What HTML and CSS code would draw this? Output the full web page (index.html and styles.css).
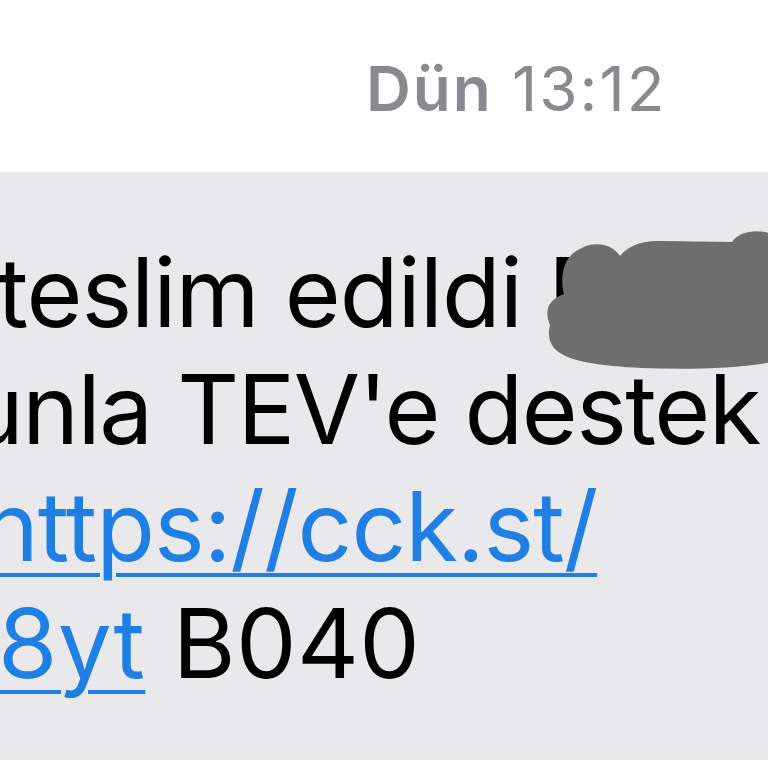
FILE: index.html
```html
<!DOCTYPE html>
<html lang="tr">
<head>
<meta charset="utf-8">
<title>Mesaj</title>
<link rel="stylesheet" href="styles.css">
</head>
<body>
<div class="screen">
  <div class="stamp"><span class="day">Dün</span> 13:12</div>
  <div class="bubble">
    <div class="line l1">teslim edildi E</div>
    <div class="line l2">unla TEV'e destek</div>
    <div class="line l3"><a class="link" href="#">https://cck.st/</a></div>
    <div class="line l4"><a class="link" href="#">8yt</a> B040</div>
    <svg class="blob" viewBox="0 0 230 140" width="230" height="140" aria-hidden="true">
      <path d="M8 95 C2 80 6 70 22 64 C18 50 20 28 36 20 C52 10 70 14 78 26 C86 16 100 10 120 11 L190 12 C196 2 214 -2 230 4 L230 132 C200 138 150 140 100 138 C60 136 24 132 12 118 C6 110 6 102 8 95 Z" fill="#6e6e6e"/>
    </svg>
  </div>
</div>
</body>
</html>
```
FILE: styles.css
```css
html, body {
  margin: 0;
  padding: 0;
  background: #ffffff;
}
.screen {
  width: 768px;
  height: 768px;
  overflow: hidden;
  font-family: "Inter", "Liberation Sans", Arial, sans-serif;
}
.stamp {
  height: 172px;
  box-sizing: border-box;
  padding: 54px 0 0 366px;
  font-size: 62px;
  line-height: 70px;
  letter-spacing: 2px;
  color: #8a8a8e;
  white-space: nowrap;
}
.day {
  font-weight: 600;
}
.bubble {
  position: relative;
  height: 588px;
  box-sizing: border-box;
  padding-top: 62px;
  background: #e9e9eb;
  overflow: hidden;
}
.line {
  font-size: 96px;
  line-height: 117px;
  letter-spacing: -1px;
  color: #000000;
  white-space: nowrap;
}
.l1 { margin-left: -3px; }
.l2 { margin-left: -33px; letter-spacing: -1.5px; }
.l3 { margin-left: -18px; }
.l4 { margin-left: -2px; letter-spacing: 0.4px; }
.link {
  color: #1f7fe5;
  text-decoration: underline;
  text-decoration-thickness: 4px;
  text-underline-offset: 12px;
}
.blob {
  position: absolute;
  left: 542px;
  top: 58px;
}
```
